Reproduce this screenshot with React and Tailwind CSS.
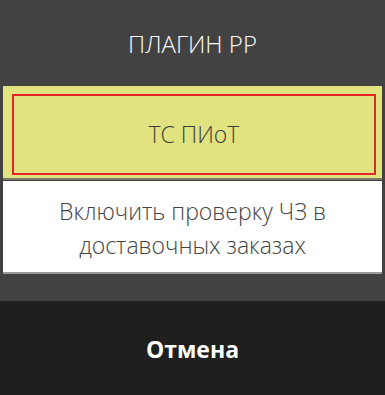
export default function App() {
  return (
    <div className="w-[385px] h-[395px] flex flex-col bg-[#414241] overflow-hidden" style={{ fontFamily: '"Open Sans", "Noto Sans", sans-serif' }}>
      <div className="h-[86px] flex items-center justify-center text-white text-[24px] font-light pt-[2px]">
        ПЛАГИН РР
      </div>
      <div className="flex flex-col px-[3px]">
        <div className="h-[94px] bg-[#e1e381] border-b-[2px] border-[#7a7a6a] pt-[8px] pb-[3px] pl-[9px] pr-[6px] flex">
          <div className="flex-1 border-[2px] border-[#e8232a] flex items-center justify-center text-[23px] text-[#3d3d3d] font-light">
            ТС ПИоТ
          </div>
        </div>
        <div className="mt-[1px] h-[93px] bg-white border-b-[2px] border-[#9a9a9a] flex items-center justify-center text-center text-[23px] leading-[34px] text-[#444] font-light px-2 pt-[2px]">
          Включить проверку ЧЗ в<br />доставочных заказах
        </div>
      </div>
      <div className="flex-1" />
      <div className="h-[94px] bg-[#1f1f1f] flex items-center justify-center text-white text-[23px] font-bold pt-[3px]">
        Отмена
      </div>
    </div>
  );
}
